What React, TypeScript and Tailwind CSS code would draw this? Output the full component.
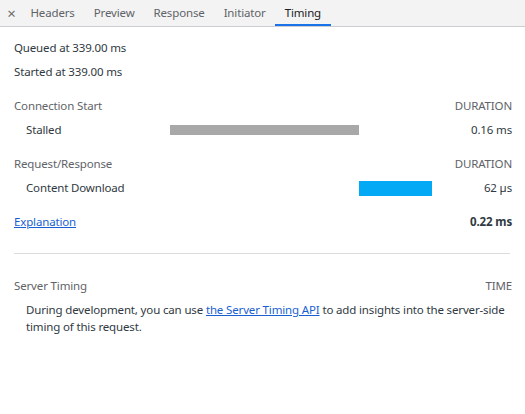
import React from "react";

const tabs = ["Headers", "Preview", "Response", "Initiator", "Timing"];

function Row({ label, bar, value }: { label: string; bar?: React.ReactNode; value: string }) {
  return (
    <div className="flex h-6 items-center">
      <div className="w-[156px] pl-3">{label}</div>
      <div className="flex h-full w-[262px] items-center">{bar}</div>
      <div className="flex-1 text-right">{value}</div>
    </div>
  );
}

function Section({ title, right }: { title: string; right: string }) {
  return (
    <div className="mt-[10px] flex h-6 items-center justify-between text-[#5f6368]">
      <span>{title}</span>
      <span>{right}</span>
    </div>
  );
}

export default function App() {
  return (
    <div
      className="h-[414px] w-[525px] bg-white text-[11.5px] tracking-[-0.15px] text-[#303942]"
      style={{ fontFamily: '"Segoe UI", "Noto Sans", sans-serif' }}
    >
      <div className="flex h-[27px] items-stretch border-b border-[#cbcdd1] bg-[#f3f3f3] text-[#5f6368]">
        <div className="flex w-[21px] items-center justify-center pl-[2px] text-[15px] text-[#6e6e6e]">×</div>
        {tabs.map((t) => (
          <div
            key={t}
            className={
              t === "Timing"
                ? "flex items-center border-b-2 border-[#1a73e8] px-[9.5px] pt-[2px] text-[#202124]"
                : "flex items-center border-b-2 border-transparent px-[9.5px] pt-[2px]"
            }
          >
            {t}
          </div>
        ))}
      </div>

      <div className="pl-[14px] pr-[13px] pt-[9px]">
        <div className="flex h-6 items-center">Queued at 339.00 ms</div>
        <div className="flex h-6 items-center">Started at 339.00 ms</div>

        <Section title="Connection Start" right="DURATION" />
        <Row
          label="Stalled"
          bar={<div className="h-[10px] w-[189px] bg-[#a8a8a8]" />}
          value="0.16 ms"
        />

        <Section title="Request/Response" right="DURATION" />
        <Row
          label="Content Download"
          bar={<div className="ml-[189px] h-[15px] w-[73px] bg-[#03a9f4]" />}
          value="62 µs"
        />

        <div className="mt-[10px] flex h-6 items-center justify-between">
          <a href="#" className="text-[#1a5fd1] underline">Explanation</a>
          <span className="font-bold">0.22 ms</span>
        </div>

        <div className="mt-[19px] mr-[2px] border-t border-[#dcdcdc]" />

        <div className="mt-5 flex h-6 items-center justify-between text-[#5f6368]">
          <span>Server Timing</span>
          <span>TIME</span>
        </div>
        <p className="mt-[3px] pl-3 leading-[17px]">
          During development, you can use{" "}
          <a href="#" className="text-[#1a5fd1] underline">the Server Timing API</a> to add insights into the
          server-side timing of this request.
        </p>
      </div>
    </div>
  );
}
